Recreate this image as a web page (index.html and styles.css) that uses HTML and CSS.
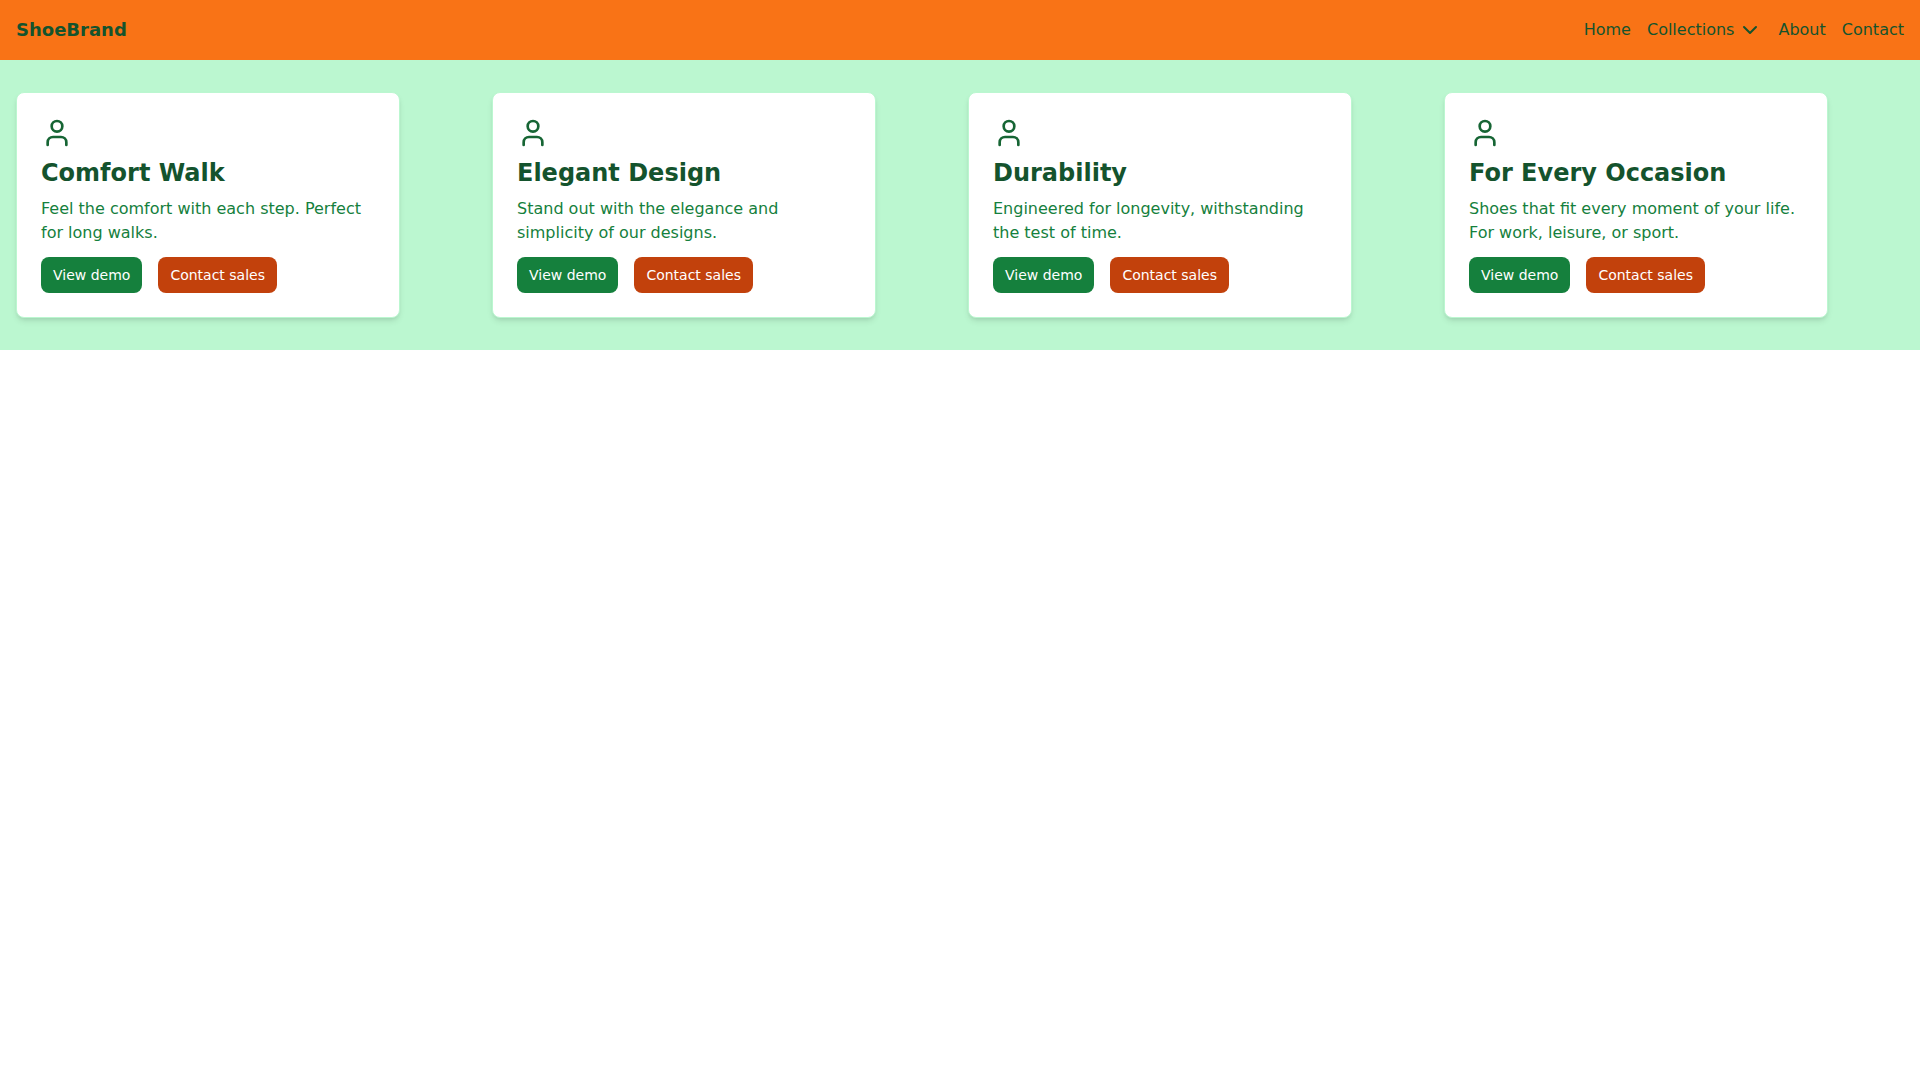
FILE: index.html
```
<!DOCTYPE html>
<html lang="en">
  <head>
    <meta charset="UTF-8" />
    <meta name="viewport" content="width=device-width, initial-scale=1.0" />
    <title>ShoeBrand</title>

    <link rel="stylesheet" href="styles.css">
  </head>
  <body>
    <header class="header">
      <a href="#" class="logo">ShoeBrand</a>
      <nav class="nav">
        <a href="#" class="nav-link">Home</a>
        <button type="button" class="nav-link nav-toggle">
          Collections
          <svg class="nav-icon" viewBox="0 0 24 24" aria-hidden="true">
            <path d="M6 9l6 6 6-6" />
          </svg>
        </button>
        <a href="#" class="nav-link">About</a>
        <a href="#" class="nav-link">Contact</a>
      </nav>
    </header>

    <main class="features">
      <article class="card">
        <svg class="card-icon" viewBox="0 0 24 24" aria-hidden="true">
          <path d="M19 21v-2a4 4 0 0 0-4-4H9a4 4 0 0 0-4 4v2" />
          <circle cx="12" cy="7" r="4" />
        </svg>
        <h2 class="card-title">Comfort Walk</h2>
        <p class="card-text">Feel the comfort with each step. Perfect for long walks.</p>
        <div class="card-actions">
          <button type="button" class="btn btn-green">View demo</button>
          <button type="button" class="btn btn-orange">Contact sales</button>
        </div>
      </article>

      <article class="card">
        <svg class="card-icon" viewBox="0 0 24 24" aria-hidden="true">
          <path d="M19 21v-2a4 4 0 0 0-4-4H9a4 4 0 0 0-4 4v2" />
          <circle cx="12" cy="7" r="4" />
        </svg>
        <h2 class="card-title">Elegant Design</h2>
        <p class="card-text">Stand out with the elegance and simplicity of our designs.</p>
        <div class="card-actions">
          <button type="button" class="btn btn-green">View demo</button>
          <button type="button" class="btn btn-orange">Contact sales</button>
        </div>
      </article>

      <article class="card">
        <svg class="card-icon" viewBox="0 0 24 24" aria-hidden="true">
          <path d="M19 21v-2a4 4 0 0 0-4-4H9a4 4 0 0 0-4 4v2" />
          <circle cx="12" cy="7" r="4" />
        </svg>
        <h2 class="card-title">Durability</h2>
        <p class="card-text">Engineered for longevity, withstanding the test of time.</p>
        <div class="card-actions">
          <button type="button" class="btn btn-green">View demo</button>
          <button type="button" class="btn btn-orange">Contact sales</button>
        </div>
      </article>

      <article class="card">
        <svg class="card-icon" viewBox="0 0 24 24" aria-hidden="true">
          <path d="M19 21v-2a4 4 0 0 0-4-4H9a4 4 0 0 0-4 4v2" />
          <circle cx="12" cy="7" r="4" />
        </svg>
        <h2 class="card-title">For Every Occasion</h2>
        <p class="card-text">Shoes that fit every moment of your life. For work, leisure, or sport.</p>
        <div class="card-actions">
          <button type="button" class="btn btn-green">View demo</button>
          <button type="button" class="btn btn-orange">Contact sales</button>
        </div>
      </article>
    </main>
  </body>
</html>
```
FILE: styles.css
```
:root {
  --white: #fff;
  --orange: #f97316;
  --orange-dark: #c2410c;
  --orange-hover: #9a3412;
  --green-light: #bbf7d0;
  --green: #15803d;
  --green-hover: #166534;
  --green-dark: #14532d;
}

* {
  margin: 0;
  padding: 0;
  box-sizing: border-box;
}

body {
  font-family: "DejaVu Sans", sans-serif;
  font-size: 16px;
  line-height: 24px;

  background: var(--white);
  color: var(--green-dark);
}

a {
  color: inherit;
  text-decoration: none;
}

button {
  border: none;
  background: transparent;
  color: inherit;
  font: inherit;
  cursor: pointer;
}

.header {
  display: flex;
  flex-wrap: wrap;
  justify-content: space-between;
  align-items: center;

  padding: 16px;
  background: var(--orange);
}

.logo {
  font-size: 18px;
  font-weight: 700;
  line-height: 28px;
}

.nav {
  display: flex;
  flex-wrap: wrap;
  align-items: center;
  gap: 16px;
}

.nav-link:hover {
  color: var(--white);
}

.nav-toggle {
  display: flex;
  align-items: center;
  gap: 4px;
}

.nav-icon,
.card-icon {
  fill: none;
  stroke: currentColor;
  stroke-width: 2;
  stroke-linecap: round;
  stroke-linejoin: round;
}

.nav-icon {
  width: 24px;
  height: 24px;
}

.features {
  display: grid;
  grid-template-columns: repeat(4, 1fr);
  gap: 16px;

  padding: 32px 16px;
  background: var(--green-light);
}

.card {
  max-width: 384px;
  width: 100%;
  padding: 24px;

  border: 1px solid var(--green-light);
  border-radius: 8px;
  background: var(--white);
  box-shadow: 0 4px 6px -1px rgba(0, 0, 0, 0.1), 0 2px 4px -2px rgba(0, 0, 0, 0.1);
}

.card-icon {
  display: block;
  width: 32px;
  height: 32px;
  margin-bottom: 8px;

  color: var(--green-hover);
}

.card-title {
  margin-bottom: 8px;

  font-size: 24px;
  font-weight: 700;
  line-height: 32px;
}

.card-text {
  margin-bottom: 12px;
  color: var(--green);
}

.card-actions {
  display: flex;
  flex-wrap: wrap;
  gap: 16px;
}

.btn {
  padding: 8px 12px;

  font-size: 14px;
  line-height: 20px;

  border-radius: 8px;
  color: var(--white);

  transition: background 0.3s;
}

.btn-green {
  background: var(--green);
}

.btn-green:hover {
  background: var(--green-hover);
}

.btn-orange {
  background: var(--orange-dark);
}

.btn-orange:hover {
  background: var(--orange-hover);
}

@media (max-width: 1280px) {
  .features {
    grid-template-columns: repeat(2, 1fr);
  }
}

@media (max-width: 640px) {
  .features {
    grid-template-columns: 1fr;
  }
}
```
